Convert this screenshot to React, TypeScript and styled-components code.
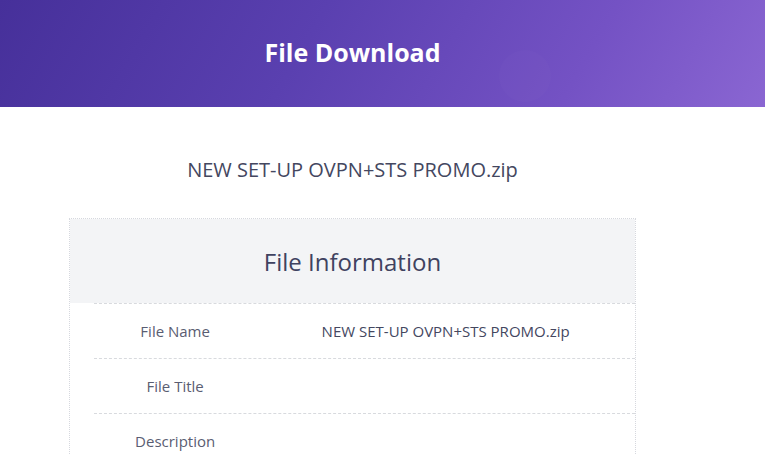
import React from 'react'
import styled, { createGlobalStyle } from 'styled-components'

const GlobalStyle = createGlobalStyle`
  body {
    margin: 0;
    background: #fff;
    font-family: 'Open Sans', 'Liberation Sans', sans-serif;
  }
`

const Banner = styled.header`
  position: relative;
  overflow: hidden;
  height: 107px;
  display: flex;
  align-items: center;
  justify-content: center;
  background: linear-gradient(120deg, #46309a 0%, #5a40b0 40%, #7452c4 75%, #8a66d2 100%);
`

const BannerTitle = styled.h1`
  color: #fff;
  font-size: 25px;
  font-weight: 700;
  margin: 0 60px 4px 0;
`

const Bubble = styled.span`
  position: absolute;
  left: 499px;
  top: 50px;
  width: 52px;
  height: 52px;
  border-radius: 50%;
  background: rgba(255, 255, 255, 0.015);
`

const Main = styled.main`
  display: flex;
  flex-direction: column;
  align-items: center;
  padding-right: 60px;
`

const FileHeading = styled.h2`
  margin: 49px 0 0;
  height: 29px;
  color: #44475f;
  font-size: 20px;
  font-weight: 400;
`

const Card = styled.section`
  margin-top: 33px;
  width: 565px;
  border: 1px dotted #d6d8de;
  border-bottom: none;
`

const CardHead = styled.div`
  height: 84px;
  display: flex;
  align-items: center;
  justify-content: center;
  background: #f3f4f6;
`

const CardTitle = styled.h3`
  margin: 0;
  color: #3f4260;
  font-size: 24px;
  font-weight: 400;
`

const Table = styled.div`
  margin-left: 24px;
`

const Row = styled.div`
  display: grid;
  grid-template-columns: 30% 70%;
  height: 54px;
  align-items: center;
  border-top: 1px dashed #d8dade;
  font-size: 15px;
  text-align: center;
`

const Label = styled.span`
  color: #5a5d72;
`

const Value = styled.span`
  color: #44475f;
`

const rows = [
  { label: 'File Name', value: 'NEW SET-UP OVPN+STS PROMO.zip' },
  { label: 'File Title', value: '' },
  { label: 'Description', value: '' },
]

const App = () => {
  return (
    <>
      <GlobalStyle />
      <Banner>
        <Bubble />
        <BannerTitle>File Download</BannerTitle>
      </Banner>
      <Main>
        <FileHeading>NEW SET-UP OVPN+STS PROMO.zip</FileHeading>
        <Card>
          <CardHead>
            <CardTitle>File Information</CardTitle>
          </CardHead>
          <Table>
            {rows.map((r) => (
              <Row key={r.label}>
                <Label>{r.label}</Label>
                <Value>{r.value}</Value>
              </Row>
            ))}
          </Table>
        </Card>
      </Main>
    </>
  )
}

export default App
